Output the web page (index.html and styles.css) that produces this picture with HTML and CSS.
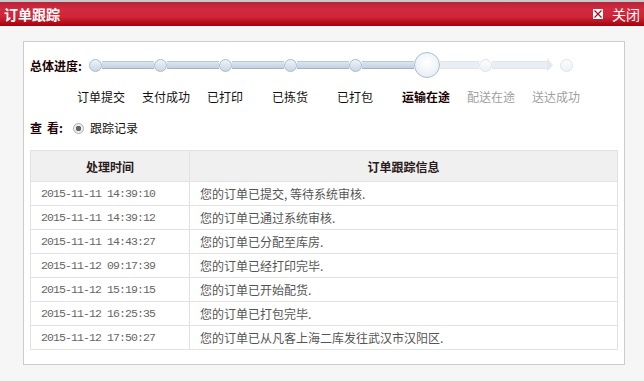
FILE: index.html
```html
<!DOCTYPE html>
<html lang="zh-CN">

<head>
    <meta charset="UTF-8" />
    <title>订单跟踪</title>
    <link rel="stylesheet" href="styles.css">
</head>

<body>
    <div class="titlebar">
        <span class="title">订单跟踪</span>
        <span class="close">
            <svg width="10" height="10" viewBox="0 0 10 10">
                <rect x="0.5" y="0.5" width="9" height="9" fill="#fff" stroke="#fff" />
                <path d="M1.5 1.5 L8.5 8.5 M8.5 1.5 L1.5 8.5" stroke="#a0101e" stroke-width="1.2" />
            </svg>
            关闭
        </span>
    </div>

    <div class="panel">
        <div class="progress">
            <span class="progress-label">总体进度:</span>
            <div class="track">
                <span class="dot"></span><span class="bar"></span>
                <span class="dot"></span><span class="bar"></span>
                <span class="dot"></span><span class="bar"></span>
                <span class="dot"></span><span class="bar"></span>
                <span class="dot"></span><span class="bar"></span>
                <span class="current"></span>
                <span class="bar todo short"></span>
                <span class="dot todo"></span>
                <span class="bar todo long"><span class="arrow"></span></span>
                <span class="dot todo end"></span>
            </div>
        </div>

        <div class="steps">
            <span>订单提交</span>
            <span>支付成功</span>
            <span>已打印</span>
            <span>已拣货</span>
            <span>已打包</span>
            <span class="now">运输在途</span>
            <span class="later">配送在途</span>
            <span class="later">送达成功</span>
        </div>

        <div class="view">
            <span class="view-label"><span class="spaced">查</span>看:</span>
            <span class="radio"></span>
            <span>跟踪记录</span>
        </div>

        <table class="log">
            <thead>
                <tr>
                    <th class="col-time">处理时间</th>
                    <th>订单跟踪信息</th>
                </tr>
            </thead>
            <tbody>
                <tr><td class="time">2015-11-11 14:39:10</td><td>您的订单已提交, 等待系统审核.</td></tr>
                <tr><td class="time">2015-11-11 14:39:12</td><td>您的订单已通过系统审核.</td></tr>
                <tr><td class="time">2015-11-11 14:43:27</td><td>您的订单已分配至库房.</td></tr>
                <tr><td class="time">2015-11-12 09:17:39</td><td>您的订单已经打印完毕.</td></tr>
                <tr><td class="time">2015-11-12 15:19:15</td><td>您的订单已开始配货.</td></tr>
                <tr><td class="time">2015-11-12 16:25:35</td><td>您的订单已打包完毕.</td></tr>
                <tr><td class="time">2015-11-12 17:50:27</td><td>您的订单已从凡客上海二库发往武汉市汉阳区.</td></tr>
            </tbody>
        </table>
    </div>
</body>

</html>
```

FILE: styles.css
```css
body {
    margin: 0;
    background: #f6f6f6;
    font-family: "Noto Sans CJK SC", sans-serif;
    font-size: 12px;
    color: #333;
}

.titlebar {
    display: flex;
    align-items: center;
    justify-content: space-between;
    height: 24px;
    padding: 0 4px;
    border-top: 2px solid #c9c9c9;
    background: linear-gradient(#b8243a, #d22a3e 30%, #cf2738 60%, #a6000c);
    color: #fff;
}

.title {
    font-size: 14px;
    font-weight: bold;
}

.close {
    display: flex;
    align-items: center;
    gap: 9px;
    font-size: 14px;
}

.panel {
    box-sizing: border-box;
    width: 602px;
    height: 324px;
    margin: 15px 0 0 23px;
    padding: 0 6px;
    border: 1px solid #cccccc;
    background: #fff;
}

.progress {
    display: flex;
    align-items: center;
    height: 26px;
    margin-top: 10px;
}

.progress-label {
    width: 59px;
    font-weight: bold;
    color: #1a0000;
}

.track {
    display: flex;
    align-items: center;
}

.dot {
    width: 11px;
    height: 11px;
    border: 1px solid #a7bbcd;
    border-radius: 50%;
    background: linear-gradient(#eef3f8, #c9d7e4);
}

.bar {
    width: 52px;
    height: 6px;
    border-top: 1px solid #b8c9d8;
    border-bottom: 1px solid #9fb4c6;
    background: linear-gradient(#dbe6ef, #c2d2e0);
}

.current {
    width: 24px;
    height: 24px;
    border: 1px solid #a9bdd0;
    border-radius: 50%;
    background: radial-gradient(circle at 50% 40%, #ffffff, #f0f4f9 55%, #dbe4ee);
}

.bar.todo {
    position: relative;
    border-color: #dfe5ea;
    background: #e9eef3;
}

.bar.short {
    width: 39px;
}

.bar.long {
    width: 55px;
    margin-right: 13px;
}

.arrow {
    position: absolute;
    right: -6px;
    top: -4px;
    width: 0;
    height: 0;
    border-top: 7px solid transparent;
    border-bottom: 7px solid transparent;
    border-left: 6px solid #e3e9ee;
}

.dot.todo {
    border-color: #dde3e8;
    background: linear-gradient(#fbfcfd, #eef2f5);
}

.steps {
    display: flex;
    margin-top: 11px;
    padding-left: 47px;
    line-height: 16px;
    color: #111;
}

.steps span {
    width: 65px;
}

.steps .now {
    font-weight: bold;
    color: #1a0000;
}

.steps .later {
    color: #a0a0a0;
}

.view {
    display: flex;
    align-items: center;
    margin-top: 15px;
    line-height: 16px;
    color: #111;
}

.view-label {
    flex-shrink: 0;
    width: 43px;
    font-weight: bold;
    color: #1a0000;
}

.view-label .spaced {
    margin-right: 5px;
}

.radio {
    width: 9px;
    height: 9px;
    margin-right: 6px;
    border: 1px solid #b0b0b0;
    border-radius: 50%;
    background: radial-gradient(circle, #666 0, #666 2.5px, #eee 3px);
}

.log {
    width: 588px;
    margin-top: 14px;
    border-collapse: collapse;
}

.log th,
.log td {
    border: 1px solid #e2e2e2;
}

.log th {
    height: 30px;
    padding: 0;
    background: #f0f0f0;
    font-size: 12px;
    font-weight: bold;
    color: #2a1a1a;
}

.log .col-time {
    width: 158px;
}

.log td {
    height: 23px;
    padding: 0 10px;
    color: #555;
}

.log .time {
    font-family: "Liberation Mono", monospace;
    font-size: 11.5px;
    letter-spacing: -0.9px;
    color: #666;
}
```
